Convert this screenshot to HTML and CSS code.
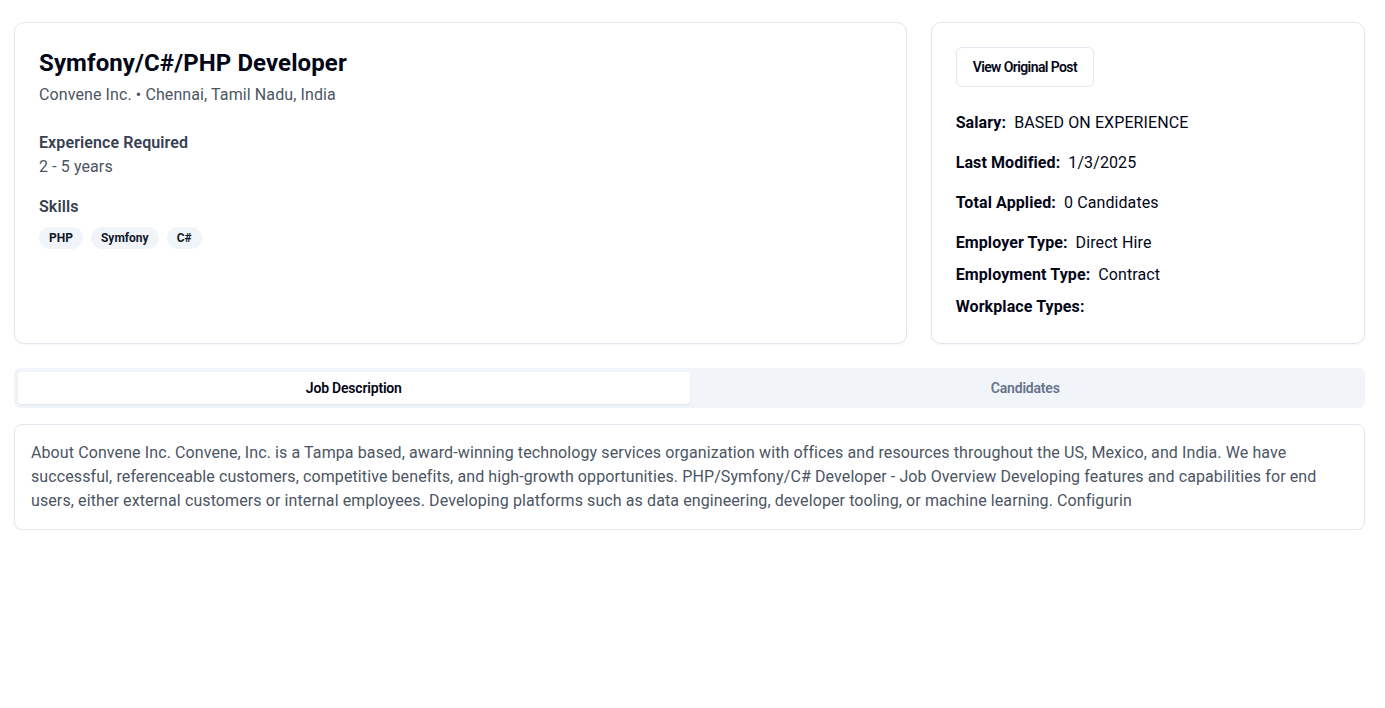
FILE: index.html
```html
<!DOCTYPE html>
<html>
<head>
<meta charset="utf-8">
<link rel="stylesheet" href="styles.css">
</head>
<body>
<div class="page">
  <div class="top">
    <section class="card main">
      <h1 class="title">Symfony/C#/PHP Developer</h1>
      <p class="sub">Convene Inc. • Chennai, Tamil Nadu, India</p>
      <div class="block">
        <h3 class="label">Experience Required</h3>
        <p class="sub2">2 - 5 years</p>
      </div>
      <div class="block skills">
        <h3 class="label">Skills</h3>
        <div class="badges">
          <span class="badge">PHP</span>
          <span class="badge">Symfony</span>
          <span class="badge">C#</span>
        </div>
      </div>
    </section>
    <aside class="card side">
      <button class="btn">View Original Post</button>
      <div class="rows">
        <div class="row"><span class="k">Salary:</span><span class="v">BASED ON EXPERIENCE</span></div>
        <div class="row"><span class="k">Last Modified:</span><span class="v">1/3/2025</span></div>
        <div class="row"><span class="k">Total Applied:</span><span class="v">0 Candidates</span></div>
        <div class="group">
          <div class="row"><span class="k">Employer Type:</span><span class="v">Direct Hire</span></div>
          <div class="row"><span class="k">Employment Type:</span><span class="v">Contract</span></div>
          <div class="row"><span class="k">Workplace Types:</span><span class="v"></span></div>
        </div>
      </div>
    </aside>
  </div>
  <div class="tabs">
    <div class="tab active">Job Description</div>
    <div class="tab">Candidates</div>
  </div>
  <div class="card desc">
    <p>About Convene Inc. Convene, Inc. is a Tampa based, award-winning technology services organization with offices and resources throughout the US, Mexico, and India. We have successful, referenceable customers, competitive benefits, and high-growth opportunities. PHP/Symfony/C# Developer - Job Overview Developing features and capabilities for end users, either external customers or internal employees. Developing platforms such as data engineering, developer tooling, or machine learning. Configurin</p>
  </div>
</div>
</body>
</html>
```
FILE: styles.css
```css
* { box-sizing: border-box; }
body {
  margin: 0;
  background: #ffffff;
  font-family: "Roboto", "Liberation Sans", sans-serif;
  color: #0f172a;
  letter-spacing: 0.1px;
}
p, h1, h3 { margin: 0; }
.page {
  padding: 22px 20px 0 14px;
}
.top {
  display: grid;
  grid-template-columns: repeat(3, 1fr);
  gap: 24px;
}
.card {
  background: #fff;
  border: 1px solid #e2e8f0;
  border-radius: 10px;
  box-shadow: 0 1px 2px rgba(15, 23, 42, 0.04);
}
.main {
  grid-column: span 2;
  padding: 24px;
}
.title {
  font-size: 24px;
  line-height: 32px;
  font-weight: 700;
  color: #020617;
  letter-spacing: 0.1px;
}
.sub {
  margin-top: 4px;
  font-size: 16px;
  line-height: 24px;
  color: #4b5563;
}
.block { margin-top: 24px; }
.skills { margin-top: 16px; }
.label {
  font-size: 16px;
  line-height: 24px;
  font-weight: 600;
  color: #374151;
}
.sub2 {
  font-size: 16px;
  line-height: 24px;
  color: #4b5563;
}
.badges {
  display: flex;
  gap: 8px;
  margin-top: 8px;
}
.badge {
  font-size: 12px;
  line-height: 16px;
  font-weight: 700;
  color: #0f172a;
  background: #f1f5f9;
  border-radius: 999px;
  padding: 3px 10px;
  letter-spacing: 0;
}
.side {
  padding: 24px;
}
.btn {
  display: inline-flex;
  align-items: center;
  justify-content: center;
  height: 40px;
  padding: 0 16px;
  border: 1px solid #e2e8f0;
  border-radius: 6px;
  background: #fff;
  font-family: inherit;
  font-size: 14px;
  font-weight: 600;
  color: #020617;
  letter-spacing: -0.6px;
}
.rows {
  margin-top: 24px;
  display: flex;
  flex-direction: column;
  gap: 16px;
}
.group {
  display: flex;
  flex-direction: column;
  gap: 8px;
}
.row {
  display: flex;
  gap: 8px;
  font-size: 16px;
  line-height: 24px;
}
.k { font-weight: 700; color: #020617; }
.v { color: #020617; }
.tabs {
  margin-top: 24px;
  display: grid;
  grid-template-columns: 1fr 1fr;
  background: #f1f5f9;
  border-radius: 6px;
  padding: 4px;
  height: 40px;
}
.tab {
  display: flex;
  align-items: center;
  justify-content: center;
  font-size: 14px;
  font-weight: 600;
  color: #64748b;
  border-radius: 4px;
  letter-spacing: -0.2px;
}
.tab.active {
  background: #fff;
  color: #020617;
  box-shadow: 0 1px 2px rgba(15, 23, 42, 0.08);
}
.desc {
  margin-top: 16px;
  padding: 16px;
  border-radius: 8px;
}
.desc p {
  font-size: 16px;
  line-height: 24px;
  color: #4b5563;
}
```
